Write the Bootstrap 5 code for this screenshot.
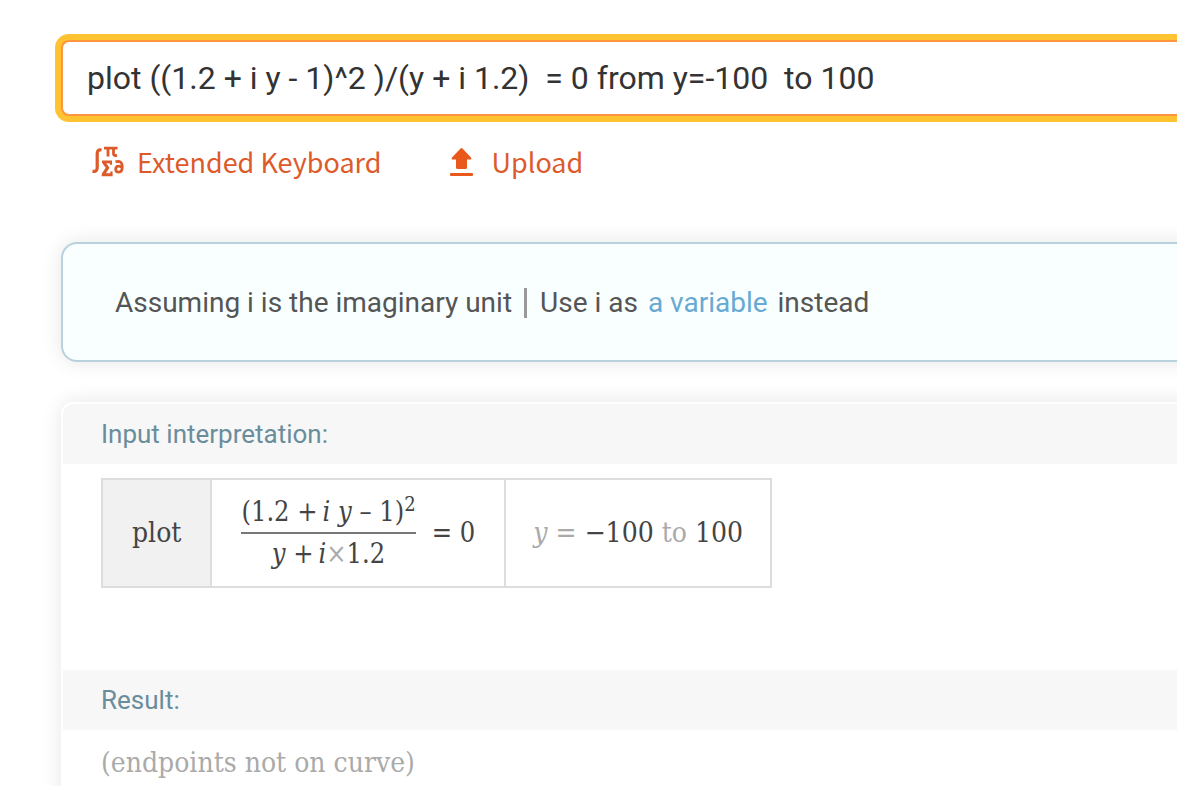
<!DOCTYPE html>
<html lang="en">
<head>
<meta charset="utf-8">
<meta name="viewport" content="width=device-width, initial-scale=1">
<title>plot query</title>
<link rel="stylesheet" href="https://cdn.jsdelivr.net/npm/bootstrap@5.3.0/dist/css/bootstrap.min.css">
<style>
body { font-family: Roboto, sans-serif; background: #fff; overflow-x: hidden; }
.page { padding: 40px 0 0 61px; overflow-x: clip; }
.query { height: 76px; padding: 0 24px; font-size: 32px; color: #333; border: 2px solid #ff963f; border-right: 0; border-radius: 8px 0 0 8px; box-shadow: 0 0 0 6px #ffc230; }
.query:focus { color: #333; border-color: #ff963f; box-shadow: 0 0 0 6px #ffc230; }
.tools { margin: 23px 0 0 31px; gap: 67px; height: 46px; }
.tools a { gap: 13px; color: #dd5a2b; font-family: "Noto Sans CJK JP", sans-serif; font-size: 27px; line-height: 46px; text-decoration: none; }
.tools a + a { gap: 17px; }
.assume { margin: 57px -32px 0 0; height: 120px; padding: 2px 52px 0; font-size: 28px; color: #555; background: #f9ffff; border: 2px solid #b7d2dc; border-radius: 16px; box-shadow: 0 0 20px rgba(0,0,0,.1); }
.assume a { color: #67a9d3; text-decoration: none; margin: 0 10px; }
.divider { width: 3px; height: 30px; background: #999; margin: 0 13px 0 12px; }
.results { margin: 40px -32px 0 0; background: #fff; border: 2px solid #fff; border-radius: 12px 12px 0 0; box-shadow: 0 0 20px rgba(0,0,0,.1); }
.pod-title { margin: 0; padding: 0 38px; height: 60px; line-height: 60px; font-size: 26px; font-weight: 400; color: #6a8d9c; background: #f7f7f7; }
.results .pod-title:first-child { border-radius: 10px 10px 0 0; }
.pod-body { padding: 14px 38px; }
.pod-body.roomy { padding-bottom: 82px; }
.formula { font-family: "DejaVu Serif Condensed", "DejaVu Serif", serif; font-size: 28px; line-height: 36px; color: #444; border-collapse: collapse; width: auto; }
.formula td { border: 2px solid #ddd; height: 108px; padding: 0 29px; white-space: nowrap; }
.formula .range { padding: 0 27px; }
.formula .verb { background: #f1f1f1; }
.fraction { text-align: center; }
.numer { border-bottom: 2px solid #777; padding-bottom: 2px; }
.denom { padding-top: 2px; }
.numer sup { font-size: 20px; line-height: 0; }
.fraction, .equals { font-size: 27px; }
.faint { color: #aaa; }
.note { font-family: "DejaVu Serif Condensed", "DejaVu Serif", serif; font-size: 28px; line-height: 38px; color: #aaa; margin: 0; }
</style>
<script src="https://cdn.jsdelivr.net/npm/bootstrap@5.3.0/dist/js/bootstrap.bundle.min.js"></script>
</head>
<body>
<main class="page">
  <form>
    <input id="query" class="form-control query" type="text" aria-label="Query" value="plot ((1.2 + i y - 1)^2 )/(y + i 1.2)  = 0 from y=-100  to 100">
  </form>
  <nav class="tools d-flex">
    <a href="#" class="d-flex align-items-center">
      <svg width="32" height="32" viewBox="0 0 32 32" fill="none" stroke="#dd5a2b" aria-hidden="true">
        <path stroke-width="3.2" d="M9.500 4C6.500 3.500 5.200 4.500 5.200 7.500v14c0 3.200-1.200 4.300-4.700 3.800"/>
        <path stroke-width="2.800" d="M12 2.200h13.500M16 2.500v8M21.500 2.500v5c0 2 .8 2.300 3.500 1.800"/>
        <path fill="#dd5a2b" stroke="none" d="M10 14.500H20v4.200h-2.200v-1.400h-3.500l3.200 4.400-3.600 5.600h4.400V25.500h2.300v4.800H9.700v-2.600l4-6-3.700-5Z"/>
        <path stroke-width="2.800" d="M23.500 15.900c4.500-1.600 6.800.6 6.800 4.600 0 3.500-1.200 5.600-3.600 5.600-4 0-3.900-5.900-.3-5.900 1.600 0 2.900.7 3.800 1.500"/>
      </svg>
      <span>Extended Keyboard</span>
    </a>
    <a href="#" class="d-flex align-items-center">
      <svg width="26" height="30" viewBox="0 0 26 30" fill="#e9591c" aria-hidden="true">
        <path d="M12.500 1Q13 1 13.500 1.500L22 10.500q1 2-.8 2H18V20.500q0 1.500-1.500 1.500h-8Q7 22 7 20.500v-8H3.800q-1.800 0-.8-2L11.500 1.500Q12 1 12.500 1Z"/>
        <rect x="1" y="26" width="23" height="3" rx="1"/>
      </svg>
      <span>Upload</span>
    </a>
  </nav>
  <section class="assume d-flex align-items-center text-nowrap">
    <span>Assuming i is the imaginary unit</span>
    <span class="divider"></span>
    <span>Use i as</span><a href="#">a variable</a><span>instead</span>
  </section>
  <section class="results">
    <h2 class="pod-title">Input interpretation:</h2>
    <div class="pod-body roomy">
      <table class="formula">
        <tr>
          <td class="verb">plot</td>
          <td>
            <div class="d-flex align-items-center gap-3">
              <div class="fraction">
                <div class="numer">(1.2 +&thinsp;<i>i y</i> – 1)<sup>2</sup></div>
                <div class="denom"><i>y</i> +&thinsp;<i>i</i><span class="faint">×</span>1.2</div>
              </div>
              <span class="equals">= 0</span>
            </div>
          </td>
          <td class="range"><span class="faint"><i>y</i> =</span> −100 <span class="faint">to</span> 100</td>
        </tr>
      </table>
    </div>
    <h2 class="pod-title">Result:</h2>
    <div class="pod-body"><p class="note">(endpoints not on curve)</p></div>
  </section>
</main>
</body>
</html>
